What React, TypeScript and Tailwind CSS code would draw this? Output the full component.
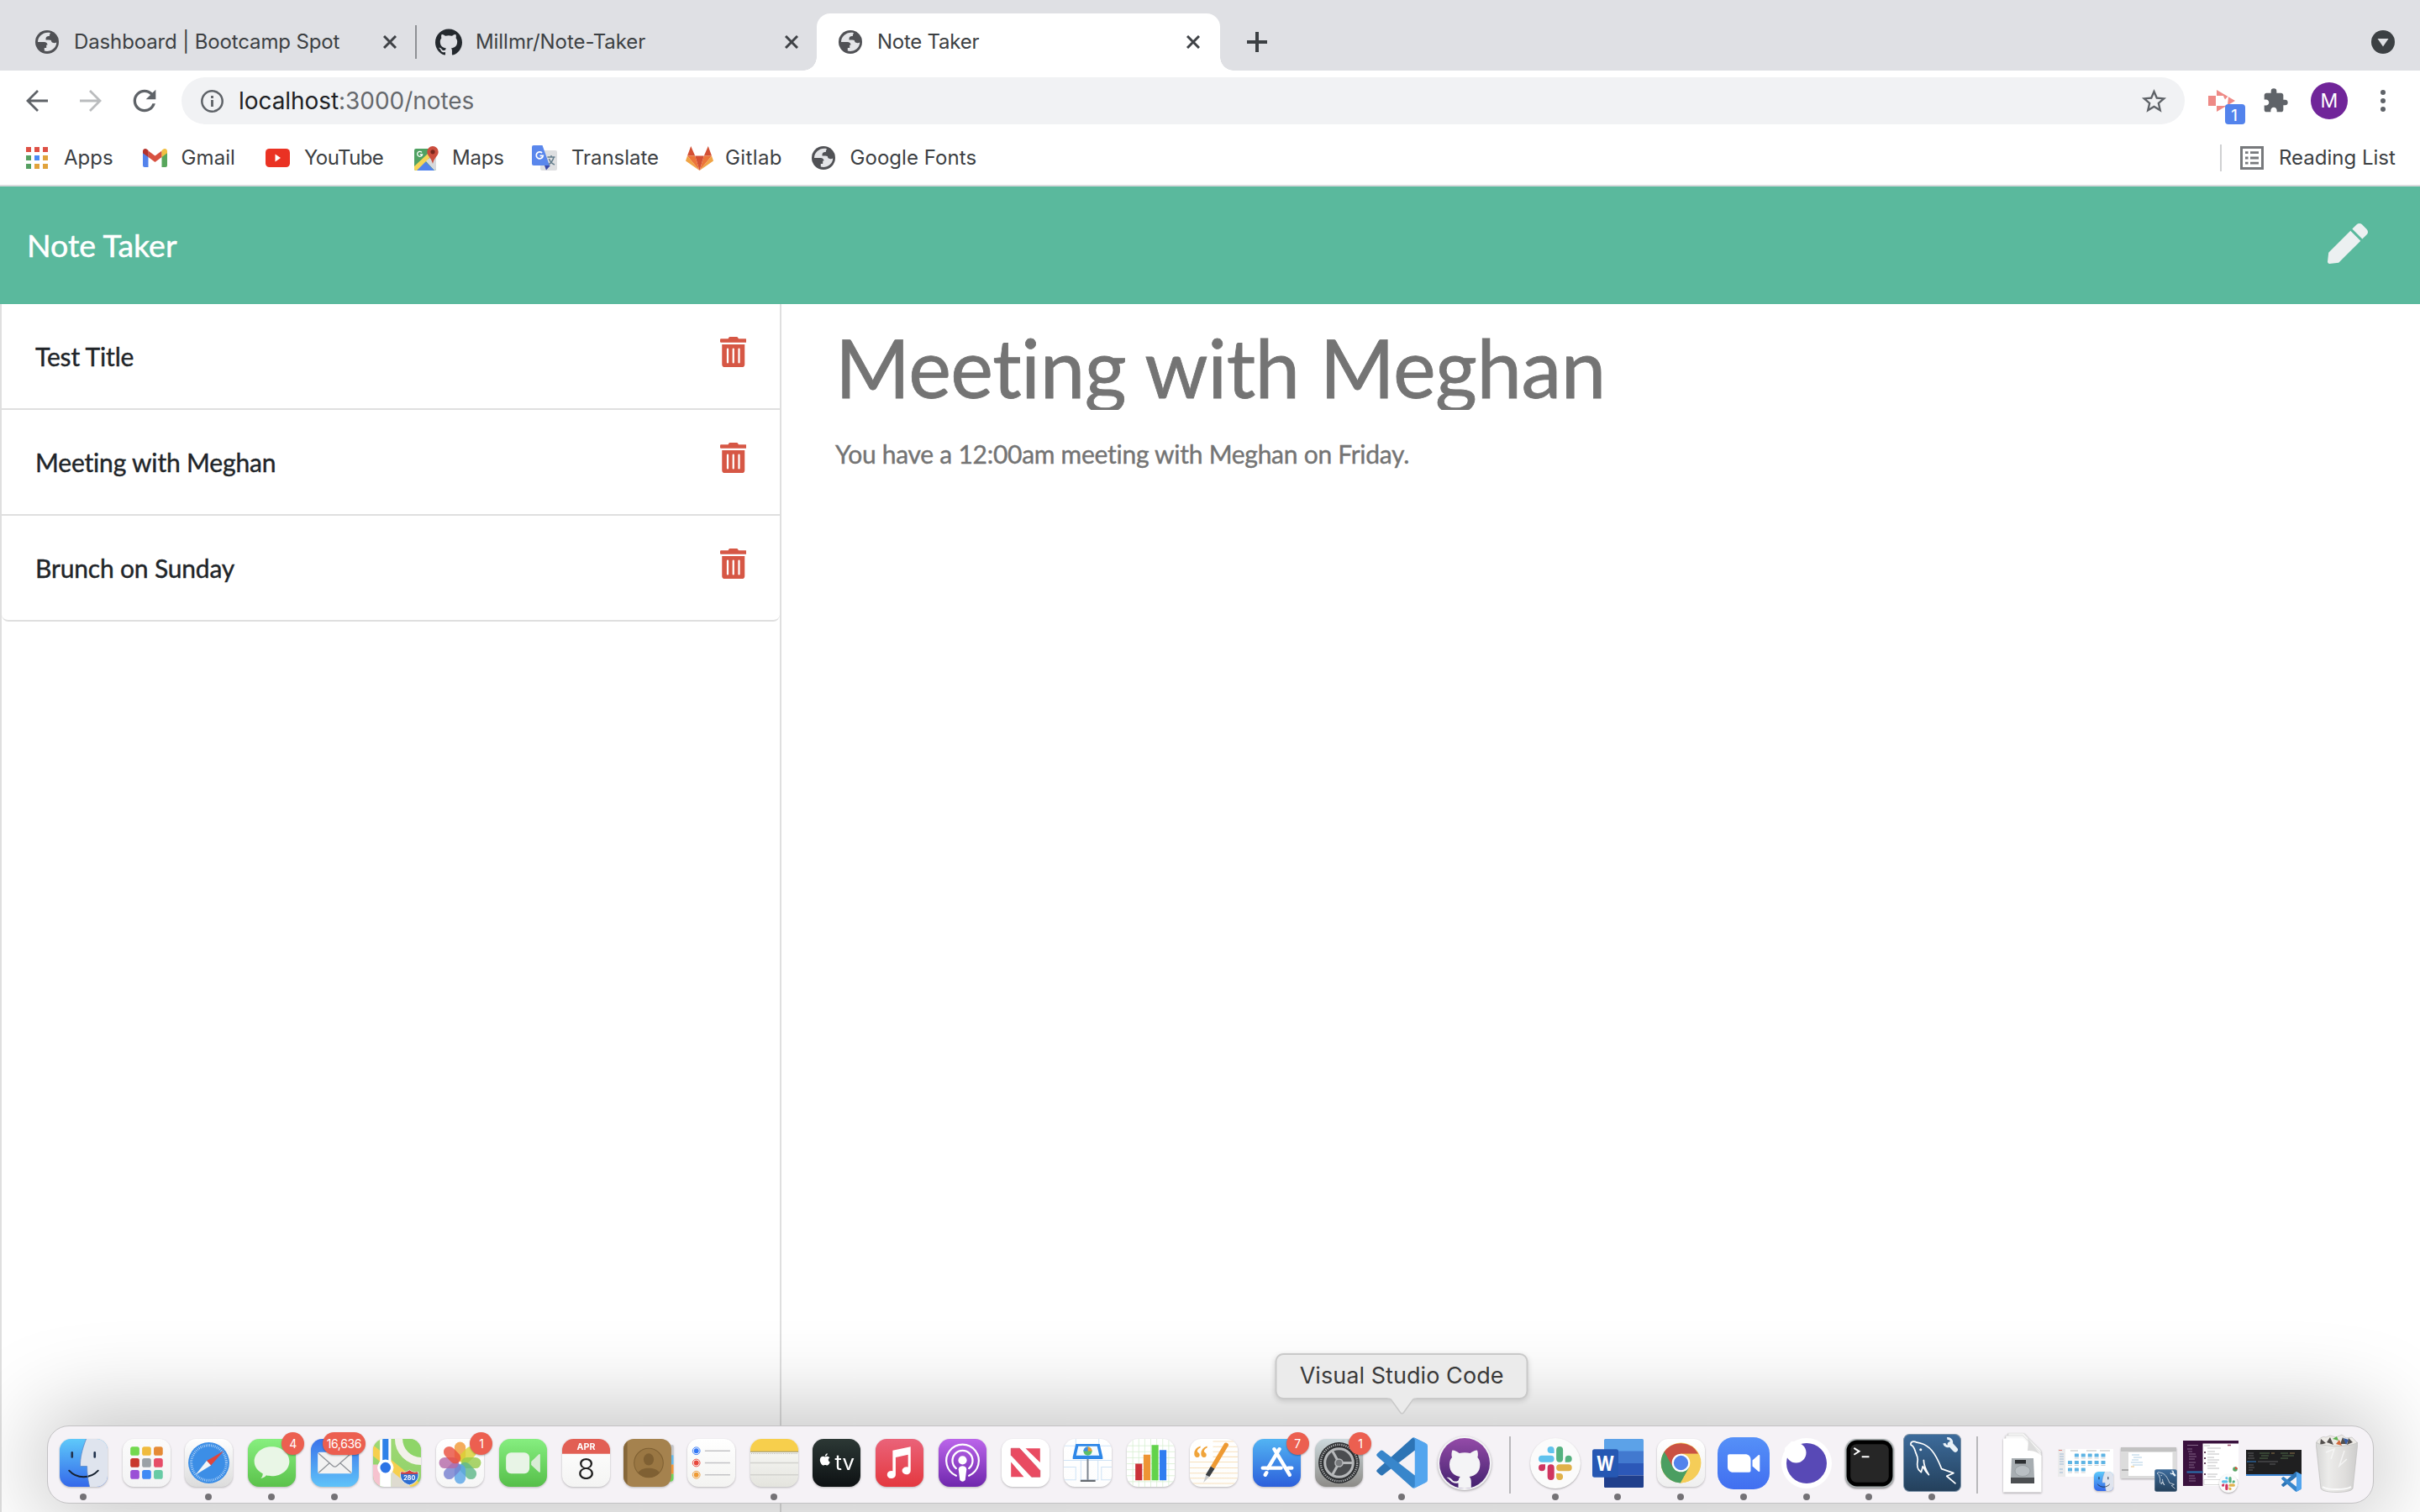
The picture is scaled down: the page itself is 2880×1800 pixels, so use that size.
import React from "react";
import { FaTrashAlt, FaPen, FaApple } from "react-icons/fa";
import { SiGithub } from "react-icons/si";
import { MdStarBorder, MdExtension, MdRefresh } from "react-icons/md";

/* ---------- browser glyphs ---------- */

function Globe() {
  return (
    <svg viewBox="0 0 28 28" className="size-7 shrink-0">
      <circle cx="14" cy="14" r="14" fill="#505155" />
      <path
        d="M18 3.2C10.5 1.4 3 6.8 3 14h7.600c2.300 0 3.900 1.400 3.900 3.600h-1.300v3.400h-2.400v3.500c6.600 1.900 14.300-2.800 14.400-10-1.400.8-2.500.9-3.500.5-1.600 0-2.800-1.200-2.800-2.800-1.400-1-3.800-.7-6.400-.7 0-3.200.8-4.400 4.300-4.400.1-1.700.4-2.600 1.200-3.900z"
        fill="#e4e5e8"
      />
    </svg>
  );
}

function Close() {
  return (
    <svg viewBox="0 0 16 16" className="size-4 shrink-0">
      <path d="M1 1l14 14M15 1L1 15" stroke="#3f4246" strokeWidth="3" />
    </svg>
  );
}

function AppsGrid() {
  const colors = ["#de5145", "#de5145", "#de5145", "#559f61", "#4a8af4", "#e1a33c", "#559f61", "#e1a33c", "#e1a33c"];
  return (
    <svg viewBox="0 0 26 26" className="size-[26px]">
      {colors.map((c, i) => (
        <rect key={i} x={(i % 3) * 10} y={Math.floor(i / 3) * 10} width="6" height="6" fill={c} />
      ))}
    </svg>
  );
}

function Gmail() {
  return (
    <svg viewBox="0 0 29 22" className="h-[22px] w-[29px]">
      <path d="M0 4h6.500v18H2a2 2 0 0 1-2-2z" fill="#5383ec" />
      <path d="M22.500 4H29v16a2 2 0 0 1-2 2h-4.500z" fill="#58a65c" />
      <path d="M6.500 2.500l8 6 8-6V10l-8 6-8-6z" fill="#d85140" />
      <path d="M0 3C0 .3 3 -.8 5.200.900L6.500 2v8L0 5.200z" fill="#b5332c" />
      <path d="M29 3c0-2.700-3-3.800-5.200-2.100L22.500 2v8L29 5.200z" fill="#f1bf42" />
    </svg>
  );
}

function YouTube() {
  return (
    <svg viewBox="0 0 29 22" className="h-[22px] w-[29px]">
      <rect width="29" height="22" rx="4.500" fill="#ea3223" />
      <path d="M11.500 6.500l6.500 4.500-6.500 4.500z" fill="#fff" />
    </svg>
  );
}

function MapsMark() {
  return (
    <svg viewBox="0 0 29 29" className="size-[29px]">
      <rect x="0" y="3" width="26" height="26" rx="2" fill="#4fa162" />
      <path d="M26 10v17a2 2 0 0 1-2 2L13 17z" fill="#d7d9dc" />
      <path d="M2 29l11-11 11 11z" fill="#5383ec" />
      <path d="M0 24L16 9l3.500 3.500L3 29H2a2 2 0 0 1-2-2z" fill="#f6d557" />
      <path d="M22 0a6.700 6.700 0 0 1 6.700 6.700c0 5-5 6.500-6.700 14.300-1.700-7.800-6.700-9.300-6.700-14.300A6.700 6.700 0 0 1 22 0z" fill="#cb4e3e" />
      <circle cx="22" cy="6.800" r="2.600" fill="#78271d" />
      <path d="M9 7.400A3 3 0 1 0 9.600 10H6.800" fill="none" stroke="#fff" strokeWidth="1.300" />
    </svg>
  );
}

function TranslateMark() {
  return (
    <svg viewBox="0 0 30 30" className="size-[30px]">
      <rect x="10" y="6" width="20" height="24" rx="2" fill="#dedfe1" />
      <path d="M15 24h7l-5 5.500z" fill="#3a49a8" />
      <path d="M2 0h10.500L21 24H2a2 2 0 0 1-2-2V2a2 2 0 0 1 2-2z" fill="#5a87ec" />
      <path d="M12 9a4 4 0 1 0 1.200 3.400H9.500" fill="none" stroke="#fff" strokeWidth="1.800" />
      <path d="M18.500 14h9M23 12v2M26 14c-1 4.500-4 7.500-6 9M20.500 16c1 3 4 6 6.500 7" fill="none" stroke="#647d8c" strokeWidth="1.500" />
    </svg>
  );
}

function GitlabMark() {
  return (
    <svg viewBox="0 0 33 29" className="h-[29px] w-[33px]">
      <path d="M6.200 0L2 11.500h9.200zM26.800 0l4.200 11.500h-9.200z" fill="#d35034" />
      <path d="M2 11.500L0 17.500 16.500 29zM31 11.500l2 6L16.500 29z" fill="#f0a445" />
      <path d="M2 11.500h9.200L16.500 29zM31 11.500h-9.200L16.500 29z" fill="#ec7539" />
      <path d="M11.200 11.500h10.600L16.500 29z" fill="#d35034" />
    </svg>
  );
}

function ReadingListMark() {
  return (
    <svg viewBox="0 0 28 28" className="size-7">
      <rect x="1.500" y="1.500" width="25" height="25" fill="none" stroke="#77797c" strokeWidth="3" />
      <path d="M6 7.700h3.500M6 14h3.500M6 20.200h3.500M12 7.700h10M12 14h10M12 20.200h10" stroke="#77797c" strokeWidth="2.800" />
    </svg>
  );
}

const bookmarks: { label: string; icon: React.ReactNode; width: string; pad: string; track: string }[] = [
  { label: "Apps", icon: <AppsGrid />, width: "w-[139px]", pad: "w-[45px]", track: "tracking-[0px]" },
  { label: "Gmail", icon: <Gmail />, width: "w-[146px]", pad: "w-[45.500px]", track: "tracking-[0.100px]" },
  { label: "YouTube", icon: <YouTube />, width: "w-[177px]", pad: "w-[46px]", track: "tracking-[-0.600px]" },
  { label: "Maps", icon: <MapsMark />, width: "w-[140px]", pad: "w-[45px]", track: "tracking-[-0.200px]" },
  { label: "Translate", icon: <TranslateMark />, width: "w-[183px]", pad: "w-[47px]", track: "tracking-[-0.050px]" },
  { label: "Gitlab", icon: <GitlabMark />, width: "w-[150px]", pad: "w-[47px]", track: "tracking-[0.400px]" },
  { label: "Google Fonts", icon: <Globe />, width: "w-[210px]", pad: "w-[45.500px]", track: "tracking-[0.050px]" },
];

function Chrome() {
  return (
    <header className="font-['Inter',sans-serif] text-[#3c4043]">
      <div className="flex h-[84px] bg-[#dfe0e4] pt-4 pl-4 text-[24px]">
        <div className="flex w-[478px] items-center pr-[22px] pl-[26px]">
          <Globe />
          <span className="ml-[18px] flex-1 tracking-[-0.130px] whitespace-nowrap">Dashboard | Bootcamp Spot</span>
          <Close />
        </div>
        <div className="mt-[14px] h-10 w-[2px] bg-[#8e9094]" />
        <div className="flex w-[476px] items-center pr-[22px] pl-[22px]">
          <SiGithub className="size-8 shrink-0 text-[#24292e]" />
          <span className="ml-[16px] flex-1 tracking-[-0.060px] whitespace-nowrap">Millmr/Note-Taker</span>
          <Close />
        </div>
        <div className="relative flex w-[480px] items-center rounded-t-[16px] bg-white pr-[24px] pl-[26px]">
          <div className="absolute bottom-0 -left-4 size-4 bg-[radial-gradient(circle_at_0_0,#dfe0e4_15.5px,#fff_16px)]" />
          <div className="absolute -right-4 bottom-0 size-4 bg-[radial-gradient(circle_at_100%_0,#dfe0e4_15.5px,#fff_16px)]" />
          <Globe />
          <span className="ml-[18px] flex-1 tracking-[-0.250px] whitespace-nowrap">Note Taker</span>
          <Close />
        </div>
        <div className="flex flex-1 items-center justify-between pr-[30px] pl-8">
          <svg viewBox="0 0 24 24" className="size-6">
            <path d="M12 0v24M0 12h24" stroke="#3c4043" strokeWidth="4" />
          </svg>
          <svg viewBox="0 0 28 28" className="size-7">
            <circle cx="14" cy="14" r="14" fill="#3c4043" />
            <path d="M7.500 10h13L14 19.500z" fill="#dfe0e4" />
          </svg>
        </div>
      </div>

      <div className="flex h-[72px] items-center bg-white pl-[31px]">
        <svg viewBox="0 0 26 26" className="size-[26px]" fill="none" stroke="#5f6368" strokeWidth="2.800">
          <path d="M26 13H2M14 1L2 13l12 12" />
        </svg>
        <svg viewBox="0 0 26 26" className="ml-[38px] size-[26px]" fill="none" stroke="#babcbe" strokeWidth="2.800">
          <path d="M0 13h24M12 1l12 12-12 12" />
        </svg>
        <MdRefresh className="ml-[31px] size-10 text-[#5f6368]" />
        <div className="ml-[24px] flex h-14 w-[2384px] items-center rounded-full bg-[#f1f2f4] pr-[19px] pl-[23px]">
          <svg viewBox="0 0 27 27" className="size-[27px]">
            <circle cx="13.500" cy="13.500" r="12.200" fill="none" stroke="#5f6368" strokeWidth="2.500" />
            <path d="M13.500 12v8M13.500 7v3" stroke="#5f6368" strokeWidth="2.800" />
          </svg>
          <span className="ml-[18px] flex-1 text-[28px] tracking-[-0.060px] text-[#66696d]">
            <span className="text-[#202124]">localhost</span>:3000/notes
          </span>
          <MdStarBorder className="size-[35px] text-[#5f6368]" />
        </div>
        <div className="relative ml-7 h-[26px] w-8">
          <svg viewBox="0 0 32 26" className="h-[26px] w-8">
            <path d="M0 7h9v12H0z" fill="#ee8a86" />
            <path d="M10 0l22 13-22 13z" fill="#ee8a86" />
            <path d="M10 7h8l1.500 2L24 8l-1 10-4 1h-9z" fill="#fff" />
            <path d="M18 7.500l5 .5-3 3.500z" fill="#ee8a86" />
          </svg>
          <div className="absolute top-[17px] left-5 flex size-6 items-center justify-center rounded-[4px] bg-[#5383ec] pr-[2px] pt-[3px] text-[18px] font-medium text-white">
            1
          </div>
        </div>
        <MdExtension className="ml-[32px] size-8 text-[#5f6368]" />
        <div className="ml-[26px] flex size-11 items-center justify-center rounded-full bg-[#702599] text-[23px] text-white">
          M
        </div>
        <svg viewBox="0 0 6 26" className="ml-[39px] h-[26px] w-[6px]" fill="#5f6368">
          <circle cx="3" cy="3" r="3" />
          <circle cx="3" cy="13" r="3" />
          <circle cx="3" cy="23" r="3" />
        </svg>
      </div>

      <div className="flex h-16 items-center bg-white pl-[31px] text-[24px]">
        {bookmarks.map((b) => (
          <div key={b.label} className={`flex shrink-0 items-center ${b.width}`}>
            <span className={`shrink-0 ${b.pad}`}>{b.icon}</span>
            <span className={`whitespace-nowrap ${b.track}`}>{b.label}</span>
          </div>
        ))}
        <div className="ml-auto flex items-center pr-[28px]">
          <div className="h-8 w-[2px] bg-[#cfd0d2]" />
          <span className="ml-[22px]">
            <ReadingListMark />
          </span>
          <span className="ml-[18px] w-[140px] whitespace-nowrap">Reading List</span>
        </div>
      </div>
      <div className="h-[2px] bg-[#dadbde]" />
    </header>
  );
}

/* ---------- notes app ---------- */

const notes = ["Test Title", "Meeting with Meghan", "Brunch on Sunday"];

function NotesApp() {
  return (
    <div className="flex flex-1 flex-col font-['Lato',sans-serif] [font-variant-ligatures:none]">
      <nav className="flex h-[140px] items-center justify-between bg-[#5ab99d] pr-[62px] pl-8">
        <span className="text-[37.500px] text-white [-webkit-text-stroke:0.5px_white]">Note Taker</span>
        <FaPen className="-mt-1 size-12 text-[#ecf0f1]" />
      </nav>
      <div className="flex flex-1">
        <aside className="w-[930px] border-x-2 border-[#dfdfdf]">
          <ul>
            {notes.map((n) => (
              <li
                key={n}
                className="flex h-[126px] justify-between border-b-2 border-[#dfdfdf] pr-[40px] pl-[40px] last:rounded-b-[8px]"
              >
                <span className="pt-[40px] text-[30px] leading-[45px] tracking-[-0.170px] text-[#212529] [-webkit-text-stroke:0.4px_#212529]">
                  {n}
                </span>
                <FaTrashAlt className="mt-[39px] h-9 w-[31.500px] text-[#d65745]" />
              </li>
            ))}
          </ul>
        </aside>
        <section className="pt-[27px] pl-[64px] text-[#747474]">
          <h1 className="h-[99px] overflow-hidden text-[96px] leading-[96px] tracking-[-0.500px] whitespace-nowrap [-webkit-text-stroke:0.8px_#747474]">
            Meeting with Meghan
          </h1>
          <p className="mt-[30px] text-[30px] leading-[45px] tracking-[-0.270px] whitespace-nowrap [-webkit-text-stroke:0.4px_#747474]">
            You have a 12:00am meeting with Meghan on Friday.
          </p>
        </section>
      </div>
    </div>
  );
}

/* ---------- dock icons ---------- */

function Tile({
  id,
  from,
  to,
  children,
}: {
  id: string;
  from: string;
  to: string;
  children?: React.ReactNode;
}) {
  return (
    <svg viewBox="0 0 56 56" className="size-[57px] overflow-visible drop-shadow-[0_1px_1px_rgba(0,0,0,0.25)]">
      <defs>
        <linearGradient id={id} x1="0" y1="0" x2="0" y2="1">
          <stop offset="0" stopColor={from} />
          <stop offset="1" stopColor={to} />
        </linearGradient>
        <clipPath id={`${id}-clip`}>
          <rect width="56" height="56" rx="13" />
        </clipPath>
      </defs>
      <rect width="56" height="56" rx="13" fill={`url(#${id})`} />
      <g clipPath={`url(#${id}-clip)`}>{children}</g>
    </svg>
  );
}

function FinderFace({ id }: { id: string }) {
  return (
    <Tile id={id} from="#5ec9fa" to="#3468ea">
      <path d="M31 0C26 13 24 22 24 32h8c0 9 1 16 3 24h21V0z" fill="#dfe4ee" />
      <path d="M14.500 16v5M41 16v5" stroke="#22334d" strokeWidth="2.600" strokeLinecap="round" />
      <path d="M11 37c9 10 25 10 34 0" fill="none" stroke="#16212f" strokeWidth="1.900" strokeLinecap="round" />
      <path d="M31 0C26 13 24 22 24 32h8c0 9 1 16 3 24" fill="none" stroke="#5d87c7" strokeWidth=".8" />
    </Tile>
  );
}

function Launchpad() {
  const c = ["#73d94f", "#f0bb3d", "#e58a35", "#c8382c", "#9aa1a6", "#e64d68", "#9a50d6", "#3f8bf5", "#67cba5"];
  return (
    <Tile id="lp" from="#fbfbfb" to="#f3f3f4">
      {c.map((f, i) => (
        <rect key={i} x={9 + (i % 3) * 13.700} y={9 + Math.floor(i / 3) * 13.700} width="10.500" height="10.500" rx="2.500" fill={f} />
      ))}
    </Tile>
  );
}

function Safari() {
  return (
    <Tile id="sf" from="#ffffff" to="#dcdcdc">
      <circle cx="28" cy="28" r="24" fill="#3c8ee6" />
      <circle cx="28" cy="28" r="20.500" fill="none" stroke="#c9e1fa" strokeWidth="3" strokeDasharray=".7 1.450" />
      <path d="M45.500 14L30.500 31 25.500 25.500z" fill="#e0453c" />
      <path d="M12.500 42L25.500 25.500 30.500 31z" fill="#f2f4f6" />
    </Tile>
  );
}

function Messages() {
  return (
    <Tile id="ms" from="#87ef7f" to="#5bc24b">
      <path d="M28 9c11.500 0 20.500 7.500 20.500 17.300S39.500 43.500 28 43.500c-2.400 0-4.500-.2-6.400-.9-1.600 2-4 3.300-6.600 3.400 1.700-1.300 2.400-3.300 2.400-5.500C11.500 37.500 7.500 32.500 7.500 26.300 7.500 16.500 16.500 9 28 9z" fill="#e9f6e6" />
    </Tile>
  );
}

function Mail() {
  return (
    <Tile id="ml" from="#3b73ea" to="#5fc3f9">
      <rect x="8" y="15.500" width="40" height="25" rx="2.500" fill="#f2f2f2" />
      <path d="M9 17l16.500 14.500c1.500 1.300 3.500 1.300 5 0L47 17M9 39.500L22 28M47 39.500L34 28" fill="none" stroke="#8f9398" strokeWidth="1.300" />
    </Tile>
  );
}

function MapsApp() {
  return (
    <Tile id="mp" from="#9fd974" to="#8fd069">
      <circle cx="56" cy="0" r="26" fill="#8fd568" stroke="#f3f1ea" strokeWidth="9" />
      <path d="M0 30h8v26H0z" fill="#f6c3cf" />
      <path d="M21 28l35 28H21z" fill="#dedbd0" />
      <path d="M0 7l60 49H44L0 20z" fill="#f6cf4e" />
      <path d="M8 0h13v56H8z" fill="#fff" />
      <path d="M11 0h7v34h-7z" fill="#2f82e8" />
      <circle cx="14.500" cy="33.500" r="9.500" fill="#fff" />
      <circle cx="14.500" cy="33.500" r="6.200" fill="#2d74e6" />
      <path d="M32.500 38.500c3.500 1 6 .5 10-2 4 2.500 6.500 3 10 2 2 7-1.500 13-10 15.500-8.500-2.500-12-8.500-10-15.500z" fill="#2f6fd0" stroke="#fff" strokeWidth=".8" />
      <path d="M33 38.500c3 1 6 .5 9.500-2 3.500 2.500 6.500 3 9.500 2l.3 2.500H32.500z" fill="#d9403b" />
      <text x="42.500" y="48.500" textAnchor="middle" fontSize="7" fontWeight="700" fill="#fff" fontFamily="Inter">280</text>
    </Tile>
  );
}

function Photos() {
  const c = ["#f29a37", "#d9d334", "#97cb4c", "#5fb889", "#5aa5e6", "#7680cf", "#b56aa8", "#e9503f"];
  return (
    <Tile id="ph" from="#ffffff" to="#f6f6f6">
      {c.map((f, i) => (
        <rect
          key={i}
          x="21.500"
          y="3.500"
          width="13"
          height="23"
          rx="6.500"
          fill={f}
          opacity=".82"
          transform={`rotate(${i * 45} 28 28)`}
        />
      ))}
    </Tile>
  );
}

function FaceTime() {
  return (
    <Tile id="ft" from="#86ee80" to="#56bf49">
      <rect x="8" y="16" width="27.500" height="24.500" rx="6" fill="#e8f4e6" />
      <path d="M37.500 26.500l9-8.500c.8-.6 1.500-.2 1.500.7v19.500c0 .9-.8 1.200-1.500.6l-9-8.300z" fill="#d9ecd6" />
    </Tile>
  );
}

function Calendar() {
  return (
    <Tile id="cl" from="#ffffff" to="#f4f4f3">
      <path d="M0 0h56v17.500H0z" fill="#e25f54" />
      <text x="28" y="13" textAnchor="middle" fontSize="10.500" fontWeight="700" fill="#fff" fontFamily="Inter">APR</text>
      <text x="28" y="47" textAnchor="middle" fontSize="34" fontWeight="300" fill="#1d1d1d" fontFamily="Inter">8</text>
    </Tile>
  );
}

function Contacts() {
  return (
    <svg viewBox="0 0 59 56" className="h-[57px] w-[60px] drop-shadow-[0_1px_1px_rgba(0,0,0,0.25)]">
      <path d="M50 7h7.500a1 1 0 0 1 1 1v11H50z" fill="#c4c5c8" />
      <path d="M50 19h8.500v11H50z" fill="#66b9ea" />
      <path d="M50 30h8.500v11H50z" fill="#f0963a" />
      <path d="M50 41h8.500v5a4 4 0 0 1-3 4H50z" fill="#6fd55b" />
      <rect width="56" height="56" rx="12" fill="#a5824e" />
      <path d="M4.500 3v50A12 12 0 0 1 0 44V12a12 12 0 0 1 4.500-9z" fill="#86673a" />
      <circle cx="29.500" cy="28" r="17" fill="#9a7743" stroke="#7f6033" strokeWidth="1" />
      <ellipse cx="29.500" cy="24" rx="6" ry="7" fill="#7f6033" />
      <path d="M17 39.500c4-7 21-7 25 0-6 7.500-19 7.500-25 0z" fill="#7f6033" />
    </svg>
  );
}

function Reminders() {
  return (
    <Tile id="rm" from="#ffffff" to="#f3f3f1">
      {["#3478f6", "#e8473c", "#ee9a34"].map((c, i) => (
        <g key={c} transform={`translate(0 ${14 + i * 14})`}>
          <circle cx="10.500" r="4.300" fill="none" stroke={c} strokeWidth=".9" />
          <circle cx="10.500" r="2.900" fill={c} />
          <path d="M20.500 0H50" stroke="#c4c4c6" strokeWidth="1.500" />
        </g>
      ))}
    </Tile>
  );
}

function Notes() {
  return (
    <Tile id="nt" from="#fbfbf9" to="#e4e4de">
      <path d="M0 0h56v15H0z" fill="#f7cf4c" />
      <path d="M0 15h56" stroke="#96906f" strokeWidth="1" />
      <path d="M1 17.200h55" stroke="#b4b3ad" strokeWidth="1.200" strokeDasharray="1 1.200" />
      <path d="M0 28h56M0 42h56" stroke="#d2d2ce" strokeWidth="1.300" />
    </Tile>
  );
}

function AppleTv() {
  return (
    <Tile id="tv" from="#2c3835" to="#0d1113">
      <FaApple x="6.500" y="16" width="20" height="21" color="#fff" />
      <text x="26" y="36.700" fontSize="25" fill="#fff" fontFamily="Inter" textLength="23" lengthAdjust="spacingAndGlyphs">tv</text>
    </Tile>
  );
}

function Music() {
  return (
    <Tile id="mu" from="#ea6379" to="#e4383f">
      <path d="M20 13.500l21-4.500v28a5 4.500 0 1 1-3-4V18.500l-14.500 3V41.500a5 4.500 0 1 1-3.500-4z" fill="#fff" />
    </Tile>
  );
}

function Podcasts() {
  return (
    <Tile id="pc" from="#bb65ea" to="#6f27ad">
      <g fill="none" stroke="#fff" strokeWidth="2.200" strokeLinecap="round">
        <path d="M20.500 43A19 19 0 1 1 35.500 43" />
        <path d="M20.500 34.500a11.800 11.800 0 1 1 15 0" />
      </g>
      <circle cx="28" cy="25" r="5" fill="#fff" />
      <path d="M23.300 35.500c0-5 9.400-5 9.400 0l-1.500 12c-.6 3-5.800 3-6.400 0z" fill="#fff" />
    </Tile>
  );
}

function News() {
  return (
    <Tile id="nw" from="#ffffff" to="#ffffff">
      <path d="M11 11h10l24 26v7.500H35L11 19z" fill="#e94b62" />
      <path d="M28 11h17v16.500zM11 27l15 17.500H11z" fill="#e94b62" />
      <path d="M11 11h10l24 26v7.500H35L11 19z" fill="none" stroke="#c73a4f" strokeWidth=".6" />
    </Tile>
  );
}

function Keynote() {
  return (
    <Tile id="kn" from="#ffffff" to="#fdfdfd">
      <path d="M0 8h56M0 25h56M0 33h14v15H0M20 25v23h20V25M56 33H44v15h12M14 0v8M41 0v8" fill="none" stroke="#cfe3f6" strokeWidth="1" />
      <path d="M28 22v26" stroke="#7d8590" strokeWidth="2" />
      <path d="M19.500 49h17.500" stroke="#656a70" strokeWidth="2" />
      <path d="M14 6h28l3.500 15v2.500h-35V21z" fill="#2e87e8" />
      <path d="M17 8.500h22l2.500 11h-27z" fill="#f5fbff" />
      <circle cx="28" cy="14.300" r="5" fill="#5bbf6a" />
      <path d="M28 14.300V9.300a5 5 0 0 1 5 5z" fill="#f09a35" />
      <path d="M28 14.300V9.300a5 5 0 0 0-5 5z" fill="#3f8ae6" />
    </Tile>
  );
}

function Numbers() {
  return (
    <Tile id="nu" from="#ffffff" to="#ffffff">
      <path d="M0 8h56M0 15h56M0 22h56M0 29h56M0 36h56M0 43h56M0 50h56M7 0v56M14 0v56M21 0v56M28 0v56M35 0v56M42 0v56M49 0v56" stroke="#d8efd2" strokeWidth=".8" />
      <path d="M10 29h8v19.500h-8z" fill="#cb3339" />
      <path d="M19.500 18.500h8v30h-8z" fill="#ee9434" />
      <path d="M29 7h8v41.500h-8z" fill="#62d34a" />
      <path d="M38.300 13h8v35.500h-8z" fill="#2f7df0" />
    </Tile>
  );
}

function Pages() {
  return (
    <Tile id="pg" from="#ffffff" to="#fdfdfb">
      <path d="M27 3h29M27 9h29M27 15h29M27 21h29M0 27h56M0 34h56M0 40h56M0 46h56M0 52h56" stroke="#f8e0bb" strokeWidth="1" />
      <text x="3.500" y="37" fontSize="44" fontWeight="700" fill="#f0a43a" fontFamily="Liberation Serif" textLength="18" lengthAdjust="spacingAndGlyphs">“</text>
      <path d="M16 51l3-9.500 4 2.500z" fill="#c7c9cb" />
      <path d="M18.500 42l6-10 4.500 2.800-6 9.500z" fill="#3c3f42" />
      <path d="M24.500 32L40.500 5c1.200-1.800 5.600.4 4.700 2.700L29 34.800z" fill="#ee9a33" />
    </Tile>
  );
}

function AppStore() {
  return (
    <Tile id="as" from="#52b4f3" to="#2c5fdb">
      <g stroke="#fff" strokeWidth="4.300" strokeLinecap="round">
        <path d="M31 12L17.500 34.500M25 12l18 30M11.500 34H33M41.500 34h4M16 39.500l-1.500 2.500" />
      </g>
    </Tile>
  );
}

function Settings() {
  return (
    <Tile id="se" from="#cdd9dd" to="#8d8b87">
      <circle cx="28" cy="28" r="24" fill="#2d2f31" />
      <circle cx="28" cy="28" r="21.300" fill="none" stroke="#a7a9ab" strokeWidth="2.400" strokeDasharray="1.300 1.200" />
      <circle cx="28" cy="28" r="16.500" fill="#4b4d50" stroke="#b6b8ba" strokeWidth="3" />
      <path d="M28 28l-8-14.500M28 28h16.500M28 28l-8 14.500" stroke="#b6b8ba" strokeWidth="3" />
      <circle cx="28" cy="28" r="4.500" fill="#77797c" stroke="#b6b8ba" strokeWidth="1.500" />
    </Tile>
  );
}

function VsCode({ className }: { className: string }) {
  return (
    <svg viewBox="0 0 100 100" className={className}>
      <path d="M96 12L75.500 1.500a6 6 0 0 0-7 1.200L2 62.500a4 4 0 0 0 0 6l5.500 5a4 4 0 0 0 5.200.2L73 27z" fill="#2d74b5" />
      <path d="M96 88L75.500 98.500a6 6 0 0 1-7-1.200L2 37.500a4 4 0 0 1 0-6l5.500-5a4 4 0 0 1 5.200-.2L73 73z" fill="#3886cb" />
      <path d="M75.500 98.800c-2.500 1-5.300.3-7-1.500 2.300 2.300 6.500.6 6.500-2.600V5.300c0-3.200-4.200-4.900-6.500-2.600 1.700-1.700 4.500-2.400 7-1.200L96 11.300a6 6 0 0 1 4 5.700v66a6 6 0 0 1-4 5.700z" fill="#53a5ee" />
    </svg>
  );
}

function GithubDesktop() {
  return (
    <div className="flex size-[64px] items-center justify-center rounded-full bg-[#f4f4f6] shadow-[0_1px_3px_rgba(0,0,0,0.35)]">
      <svg viewBox="0 0 60 60" className="size-[60px]">
        <defs>
          <linearGradient id="ghd" x1="0" y1="0" x2="0" y2="1">
            <stop offset="0" stopColor="#944ba8" />
            <stop offset="1" stopColor="#43216e" />
          </linearGradient>
          <clipPath id="ghd-clip">
            <circle cx="30" cy="30" r="30" />
          </clipPath>
        </defs>
        <circle cx="30" cy="30" r="30" fill="url(#ghd)" />
        <path
          clipPath="url(#ghd-clip)"
          d="M22.500 60v-6.500c-9 1.500-9.500-5-14-6.500 5-1.800 6.500 4 9.500 4.500 2.300.4 4.700-.5 4.800-1.500.2-1.500 1-3.200 2-4-6.500-1-12.800-5-12.800-14.500 0-3.500 1-6.200 3-8.500-.8-2.500-.6-6 .4-8.500 3.500 0 6 2 8.300 3.500 4-1 9-1 13 0 2.300-1.500 4.800-3.500 8.300-3.500 1 2.500 1.200 6 .4 8.500 2 2.300 3 5 3 8.500 0 9.500-6.300 13.500-12.800 14.500 1.400 1.200 2.200 3.200 2.200 6V60z"
          fill="#f4f4f6"
        />
      </svg>
    </div>
  );
}

function SlackMark() {
  return (
    <svg viewBox="0 0 54 54" className="size-full">
      <path fill="#60c2ed" d="M19.700 0a5.400 5.400 0 1 0 0 10.800h5.400V5.400A5.400 5.400 0 0 0 19.700 0M19.700 14.400H5.400a5.400 5.400 0 0 0 0 10.800h14.300a5.400 5.400 0 0 0 0-10.800" />
      <path fill="#55b17f" d="M53.600 19.800a5.400 5.400 0 0 0-10.800 0v5.400h5.400a5.400 5.400 0 0 0 5.400-5.400M39.300 19.800V5.400a5.400 5.400 0 0 0-10.800 0v14.400a5.400 5.400 0 0 0 10.800 0" />
      <path fill="#e0b14a" d="M33.900 54a5.400 5.400 0 0 0 0-10.800h-5.400v5.400a5.400 5.400 0 0 0 5.400 5.400M33.900 39.600h14.300a5.400 5.400 0 0 0 0-10.800H33.900a5.400 5.400 0 0 0 0 10.800" />
      <path fill="#cf3560" d="M0 34.200a5.400 5.400 0 0 0 10.800 0v-5.400H5.400A5.400 5.400 0 0 0 0 34.200M14.400 34.200v14.400a5.400 5.400 0 0 0 10.800 0V34.200a5.400 5.400 0 0 0-10.800 0" />
    </svg>
  );
}

function Slack() {
  return (
    <div className="size-[60px] rounded-full bg-[#fbfbfb] p-[10px] shadow-[0_1px_2px_rgba(0,0,0,0.3)]">
      <SlackMark />
    </div>
  );
}

function Word() {
  return (
    <svg viewBox="0 0 61 54" className="h-[58px] w-[61px]" preserveAspectRatio="none">
      <path d="M14 1.500A1.500 1.500 0 0 1 15.500 0h44A1.500 1.500 0 0 1 61 1.500V14H14z" fill="#5ca2e8" />
      <path d="M14 13.500h47V27H14z" fill="#4279cf" />
      <path d="M14 27h47v13.500H14z" fill="#2c58b8" />
      <path d="M14 40.500h47v12a1.500 1.500 0 0 1-1.500 1.500h-44a1.500 1.500 0 0 1-1.500-1.500z" fill="#203f8c" />
      <rect y="11.500" width="31" height="31" rx="2.500" fill="#2658b3" />
      <text x="5" y="35.500" fontSize="23" fontWeight="700" fill="#fff" fontFamily="Inter" textLength="21" lengthAdjust="spacingAndGlyphs">W</text>
    </svg>
  );
}

function ChromeApp() {
  return (
    <Tile id="cr" from="#ffffff" to="#efefef">
      <circle cx="28" cy="28" r="23.500" fill="#f5cd58" />
      <path d="M7.650 16.250A23.500 23.500 0 0 1 48.350 17.500H28L18 34z" fill="#ca5143" />
      <path d="M8.500 15A23.500 23.500 0 0 0 27.500 51.500L38 33 28 38 18.500 33z" fill="#4b9e61" />
      <path d="M27.500 51.500L37.500 33.500 28 17.500h20.400A23.500 23.500 0 0 1 27.500 51.500z" fill="#f5cd58" />
      <circle cx="28" cy="28" r="10.600" fill="#fff" />
      <circle cx="28" cy="28" r="8.500" fill="#5383ec" />
    </Tile>
  );
}

function Zoom() {
  return (
    <svg viewBox="0 0 62 62" className="size-[62px]">
      <defs>
        <linearGradient id="zm" x1="0" y1="0" x2="0" y2="1">
          <stop offset="0" stopColor="#5590f8" />
          <stop offset="1" stopColor="#416ff0" />
        </linearGradient>
      </defs>
      <rect width="62" height="62" rx="19" fill="url(#zm)" />
      <path d="M12 22.500c0-1.400.8-2.200 2.200-2.200H33c3.800 0 6.500 2.600 6.500 6.300v13c0 1.400-.8 2.200-2.200 2.200H18.500c-3.800 0-6.500-2.600-6.500-6.300z" fill="#fff" />
      <path d="M41.500 27.500l7.200-6.300c.8-.6 1.600-.2 1.600.8v18c0 1-.8 1.400-1.600.8l-7.200-6.300z" fill="#fff" />
    </svg>
  );
}

function Insomnia() {
  return (
    <svg viewBox="0 0 60 60" className="size-[60px]">
      <circle cx="30" cy="30" r="30" fill="#fff" />
      <circle cx="30" cy="30" r="24" fill="#5849b6" />
      <circle cx="17.500" cy="17.500" r="12" fill="#fff" />
      <path d="M4 24L24 4 12 4 4 12z" fill="#fff" />
    </svg>
  );
}

function Terminal() {
  return (
    <svg viewBox="0 0 56 56" className="size-[58px] drop-shadow-[0_1px_1px_rgba(0,0,0,0.5)]">
      <rect width="56" height="56" rx="13" fill="#a9b0b1" />
      <rect x="1.500" y="1.500" width="53" height="53" rx="12" fill="#000" />
      <rect x="6" y="6" width="44" height="44" rx="7" fill="#262626" />
      <path d="M10 10.500l6 3.800-6 3.800M19 20.500h8.500" fill="none" stroke="#fff" strokeWidth="1.900" />
    </svg>
  );
}

function Workbench({ id, className }: { id: string; className: string }) {
  return (
    <svg viewBox="0 0 68 68" className={className}>
      <defs>
        <linearGradient id={id} x1="0" y1="0" x2="0" y2="1">
          <stop offset="0" stopColor="#3c6b9b" />
          <stop offset="1" stopColor="#24405b" />
        </linearGradient>
      </defs>
      <rect x=".5" y=".5" width="67" height="67" rx="7" fill={`url(#${id})`} stroke="#7d93a8" />
      <path
        d="M9 13c-1-4 3-5 7-3 15 2 22 13 29 31l14 5-8 3.500 10 8.500M9 13c3 1 4 4 5 7 1 4 3 6 3 10 0 4-2 7 1 12l3 3 2-7c2 4 4 7 7 10-3-5-6-11-6-17"
        fill="none"
        stroke="#fff"
        strokeWidth="1.700"
        strokeLinejoin="round"
        strokeLinecap="round"
      />
      <circle cx="20.500" cy="18.500" r="1.500" fill="#fff" />
      <path d="M55 12l6 6.500" stroke="#e8f1f8" strokeWidth="6" strokeLinecap="round" />
      <path d="M51.500 5.500a4.500 4.500 0 1 1-3.500 5.500" fill="none" stroke="#e8f1f8" strokeWidth="3" />
    </svg>
  );
}

function DiskImage() {
  return (
    <svg viewBox="0 0 46 71" className="h-[71px] w-[46px] drop-shadow-[0_1px_1px_rgba(0,0,0,0.35)]">
      <path d="M6 0h18l21 21v20H6z" fill="#f3f3f3" stroke="#d8d8d8" strokeWidth=".7" />
      <path d="M3 3h20l22 21v20H3z" fill="#f8f8f8" stroke="#d8d8d8" strokeWidth=".7" />
      <path d="M0 6.500h24L45.500 27v43.500H0z" fill="#fff" />
      <path d="M25 0c6 5 5 10 4 21 6 0 12 1 16 6z" fill="#dcdcdc" />
      <path d="M10 30h26l1 24H9z" fill="#a7adb1" />
      <path d="M9 53h28v7H9z" fill="#4c4f52" />
      <path d="M14 32h13v4.500H14z" fill="#2d3033" />
      <ellipse cx="23" cy="45" rx="9" ry="6.500" fill="#b9bfc3" stroke="#8f969a" strokeWidth=".7" />
    </svg>
  );
}

function FinderWindow() {
  return (
    <div className="relative h-[33px] w-[66px] bg-white">
      <svg viewBox="0 0 66 33" className="h-[33px] w-[66px]">
        <path d="M0 0h9v33H0z" fill="#ebebec" />
        <path d="M2 6h5M2 9h5M2 12h5M2 15h5M2 18h5M2 24h4M2 28h4" stroke="#9fb9d4" strokeWidth="1" />
        <path d="M1 1.500h4" stroke="#e8817b" strokeWidth="1" />
        <path d="M15 2h9M34 2h12M50 2h12" stroke="#a9a9aa" strokeWidth=".8" />
        {[0, 1, 2].map((r) =>
          [0, 1, 2, 3, 4, 5].map((c) =>
            (r === 0 && c === 0) || (r === 2 && c > 2) ? null : (
              <g key={`${r}-${c}`}>
                <rect x={12 + c * 7.900} y={5.500 + r * 8.500} width="5" height="4" rx=".6" fill="#5fb4e4" />
                <path d={`M${12 + c * 7.900} ${11 + r * 8.500}h5`} stroke="#b9bcbf" strokeWidth=".7" />
              </g>
            ),
          )
        )}
      </svg>
      <div className="absolute top-[27px] left-[43px] size-[23px] [&>svg]:size-full">
        <FinderFace id="fw" />
      </div>
    </div>
  );
}

function WorkbenchWindow() {
  return (
    <div className="relative h-[37px] w-[66px]">
      <svg viewBox="0 0 66 37" className="h-[37px] w-[66px] drop-shadow-[0_1px_1px_rgba(0,0,0,0.3)]">
        <path d="M0 0h66v37H0z" fill="#fff" />
        <path d="M0 0h66v5.500H0z" fill="#c2c2c2" />
        <path d="M0 5.500h9V37H0zM61.500 5.500H66V37h-4.500zM9 34h53v3H9z" fill="#dcdcdc" />
        <path d="M1 27h8" stroke="#777" strokeWidth="1" />
        <path d="M13 9h9M15 12h10M13 15h8M12 18h14M14 21h12" stroke="#a9cbe2" strokeWidth=".9" />
        <path d="M12 23h4" stroke="#e3b36a" strokeWidth=".9" />
      </svg>
      <Workbench id="wbm" className="absolute top-[26px] left-[40px] size-[27px]" />
    </div>
  );
}

function SlackWindow() {
  return (
    <div className="relative h-[54px] w-[66px]">
      <svg viewBox="0 0 66 54" className="h-[54px] w-[66px]">
        <path d="M0 0h66v54H0z" fill="#fff" />
        <path d="M0 0h66v3.500H0zM0 3h23.500v51H0z" fill="#3a123e" />
        <path d="M5 5.500h13M5 10h6M6 13h5M7 16h8M7 19h9M7 22h7M7 26h8M7 29h6M7 32h7M7 42h7M7 45h8M7 48h8" stroke="#8b6f8e" strokeWidth=".9" />
        <path d="M4.500 37.500h19" stroke="#2b6ca8" strokeWidth="2.200" />
        <path d="M25 6h7M29 9h16M29 13h9M29 16h14M29 20h8M29 23h14M29 26h12M29 30h10M29 33h14M29 40h12M29 43h10" stroke="#b9b9bb" strokeWidth=".9" />
        <path d="M26 13v2M26 20v2M26 26v2M26 39v2" stroke="#67455f" strokeWidth="2" />
        <path d="M53 5.500h4" stroke="#9a4a6a" strokeWidth="1.500" />
        <circle cx="62" cy="34" r="2.800" fill="#5aa465" />
        <path d="M62 34v-2.800a2.800 2.800 0 0 1 2.800 2.800z" fill="#d85140" />
        <path d="M25 46.500h40v6H25z" fill="none" stroke="#d2d2d2" strokeWidth=".8" />
      </svg>
      <div className="absolute top-[40px] left-[43px] size-[22px] rounded-full bg-[#fbfbfb] p-[3px] shadow-[0_1px_2px_rgba(0,0,0,0.3)]">
        <SlackMark />
      </div>
    </div>
  );
}

function CodeWindow() {
  return (
    <div className="relative h-[31px] w-[66px]">
      <svg viewBox="0 0 66 31" className="h-[31px] w-[66px]">
        <path d="M0 0h66v31H0z" fill="#1f1f20" />
        <path d="M0 30h66" stroke="#3b82d0" strokeWidth="2" />
        <path d="M2 4h7M3 7h6M2 10h8M3 18h6M3 21h7M3 24h5M14 14h24M28 17h7" stroke="#6d6d6f" strokeWidth=".8" />
        <path d="M1 14h11" stroke="#2a5f93" strokeWidth="1.500" />
        <path d="M16 4h12M18 7h9M16 10h10M41 4h9M43 7h14M41 10h9" stroke="#5d7d54" strokeWidth=".8" />
        <path d="M30 4h4M52 4h6" stroke="#a98a55" strokeWidth=".8" />
      </svg>
      <VsCode className="absolute top-[26px] left-[42px] size-6" />
    </div>
  );
}

function Trash() {
  return (
    <svg viewBox="0 0 50 70" className="h-[70px] w-[50px]">
      <defs>
        <linearGradient id="bin" x1="0" y1="0" x2="1" y2="0">
          <stop offset="0" stopColor="#d3d3d2" />
          <stop offset=".3" stopColor="#ebebe9" />
          <stop offset=".7" stopColor="#dddcda" />
          <stop offset="1" stopColor="#c9c9c8" />
        </linearGradient>
      </defs>
      <path d="M1 9c4-3 6-7 11-5l5-2 7 2 7-3 5 4 7-1 6 6-2 8H5z" fill="#eceae6" stroke="#bcbbb8" strokeWidth=".6" />
      <path d="M6 6l6 5-7 2zM13 10l4-6 4 9zM29 12l3-8 5 8zM39 5l5 5-7 3z" fill="#54504e" />
      <path d="M20 6l5-3 2 5z" fill="#5fb04f" />
      <path d="M33 5l6 2-3 6z" fill="#375ea8" />
      <path d="M24 12l4-5 3 7z" fill="#d2693c" />
      <path d="M0 10c8 6 42 6 50 0l-6 55c-2 6-36 6-38 0z" fill="url(#bin)" fillOpacity=".93" stroke="#bdbdbc" strokeWidth=".7" />
      <path d="M12 22l10-4-4 12M34 20l-6 18 9-8" fill="none" stroke="#f8f8f7" strokeWidth="1.500" opacity=".8" />
      <path d="M8 63c6 4 28 4 34 0" fill="none" stroke="#fafafa" strokeWidth="2" />
    </svg>
  );
}

/* ---------- dock ---------- */

type DockItem = { name: string; icon: React.ReactNode; running?: boolean; badge?: string; label?: string };

const apps: DockItem[] = [
  { name: "finder", icon: <FinderFace id="fd" />, running: true },
  { name: "launchpad", icon: <Launchpad /> },
  { name: "safari", icon: <Safari />, running: true },
  { name: "messages", icon: <Messages />, running: true, badge: "4" },
  { name: "mail", icon: <Mail />, running: true, badge: "16,636" },
  { name: "maps", icon: <MapsApp /> },
  { name: "photos", icon: <Photos />, badge: "1" },
  { name: "facetime", icon: <FaceTime /> },
  { name: "calendar", icon: <Calendar /> },
  { name: "contacts", icon: <Contacts /> },
  { name: "reminders", icon: <Reminders /> },
  { name: "notes", icon: <Notes />, running: true },
  { name: "tv", icon: <AppleTv /> },
  { name: "music", icon: <Music /> },
  { name: "podcasts", icon: <Podcasts /> },
  { name: "news", icon: <News /> },
  { name: "keynote", icon: <Keynote /> },
  { name: "numbers", icon: <Numbers /> },
  { name: "pages", icon: <Pages /> },
  { name: "appstore", icon: <AppStore />, badge: "7" },
  { name: "settings", icon: <Settings />, badge: "1" },
  { name: "vscode", icon: <VsCode className="size-[61px]" />, running: true, label: "Visual Studio Code" },
  { name: "github", icon: <GithubDesktop /> },
];

const extraApps: DockItem[] = [
  { name: "slack", icon: <Slack />, running: true },
  { name: "word", icon: <Word />, running: true },
  { name: "chrome", icon: <ChromeApp />, running: true },
  { name: "zoom", icon: <Zoom />, running: true },
  { name: "insomnia", icon: <Insomnia />, running: true },
  { name: "terminal", icon: <Terminal />, running: true },
  { name: "workbench", icon: <Workbench id="wb" className="size-[69px] shrink-0" />, running: true },
];

const windows: DockItem[] = [
  { name: "disk", icon: <DiskImage /> },
  { name: "finder-window", icon: <FinderWindow /> },
  { name: "workbench-window", icon: <WorkbenchWindow /> },
  { name: "slack-window", icon: <SlackWindow /> },
  { name: "code-window", icon: <CodeWindow /> },
  { name: "trash", icon: <Trash /> },
];

function Slot({ item }: { item: DockItem }) {
  const wide = item.badge && item.badge.length > 1;
  return (
    <div className="relative flex h-full w-[74.730px] shrink-0 items-center justify-center pb-[4px]">
      {item.icon}
      {item.badge && (
        <div
          className={`absolute top-[7px] flex h-[27px] items-center justify-center rounded-full bg-[#ec5f50] text-[14px] tracking-tight text-white shadow-[0_1px_2px_rgba(0,0,0,0.3)] ${
            wide ? "left-[23px] w-[51px]" : "left-[49px] w-[27px]"
          }`}
        >
          {item.badge}
        </div>
      )}
      {item.running && <div className="absolute bottom-[3px] left-[33px] size-2 rounded-full bg-[#747276]" />}
      {item.label && (
        <div className="absolute bottom-[123px] left-[37px] flex h-[55px] w-[301px] -translate-x-1/2 items-center justify-center rounded-[10px] border-2 border-[#c9c9c9] bg-[#ebebeb] text-[27px] tracking-[0.060px] whitespace-nowrap text-[#3a3a3a] shadow-[0_2px_6px_rgba(0,0,0,0.15)]">
          {item.label}
          <svg viewBox="0 0 34 21" className="absolute top-[50px] left-[132px] h-[21px] w-[34px]">
            <path d="M0 0h34v2c-4 0-4 1-6 4L19 18.500c-1 1.600-3 1.600-4 0L6 6C4 3 4 2 0 2z" fill="#ebebeb" />
            <path d="M0 2c4 0 4 1 6 4l9 12.500c1 1.600 3 1.600 4 0L28 6c2-3 2-4 6-4" fill="none" stroke="#c9c9c9" strokeWidth="1.500" />
          </svg>
        </div>
      )}
    </div>
  );
}

function Separator() {
  return (
    <div className="flex w-[33.200px] shrink-0 justify-center pt-[12px]">
      <div className="h-[68px] w-[2px] bg-[#b9b8bb]" />
    </div>
  );
}

function Dock() {
  return (
    <div className="absolute bottom-[10px] left-[56px] flex h-[93px] w-[2769px] rounded-[26px] border border-[#c3c2c4] bg-[#f5f2f6] pl-[5px] font-['Inter',sans-serif] shadow-[0_0_110px_10px_rgba(0,0,0,0.27)]">
      {apps.map((a) => (
        <Slot key={a.name} item={a} />
      ))}
      <Separator />
      {extraApps.map((a) => (
        <Slot key={a.name} item={a} />
      ))}
      <Separator />
      {windows.map((a) => (
        <Slot key={a.name} item={a} />
      ))}
    </div>
  );
}

export default function App() {
  return (
    <div className="relative flex h-[1800px] w-[2880px] flex-col overflow-hidden bg-white">
      <Chrome />
      <NotesApp />
      <Dock />
    </div>
  );
}
